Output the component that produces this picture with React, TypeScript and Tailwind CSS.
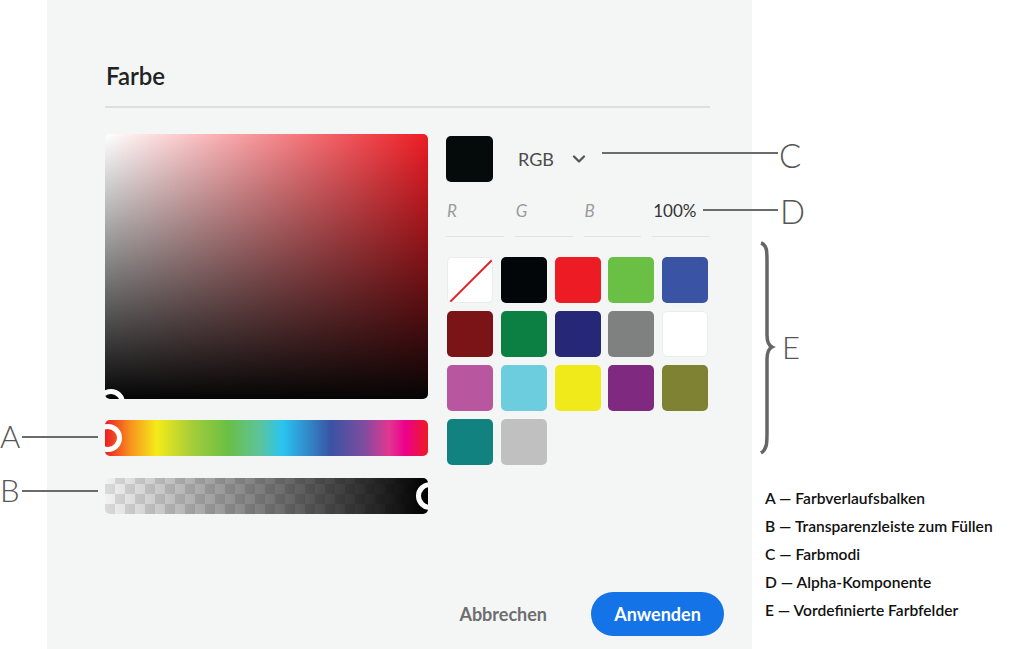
import { ChevronDown } from 'lucide-react'

const swatches = [
  'none', '#030608', '#ed1c24', '#6abf45', '#3a53a4',
  '#7b1416', '#0b8042', '#262877', '#7f8080', '#ffffff',
  '#b8569f', '#6ccddf', '#f1ea1a', '#7f2a80', '#7f8233',
  '#11827f', '#c0c0c0',
]

const legend = [
  'A — Farbverlaufsbalken',
  'B — Transparenzleiste zum Füllen',
  'C — Farbmodi',
  'D — Alpha-Komponente',
  'E — Vordefinierte Farbfelder',
]

function Ring({ className }: { className: string }) {
  return <div className={`absolute w-[28px] h-[28px] rounded-full border-[5px] border-white ${className}`} />
}

export default function App() {
  return (
    <div className="relative w-[1009px] h-[649px] bg-white flex font-['Lato',sans-serif] overflow-hidden">
      <div className="w-[47px] shrink-0" />

      {/* dialog */}
      <div className="w-[705px] h-full shrink-0 bg-[#f4f6f6] pl-[58px] pr-[28px] pt-[62px] flex flex-col">
        <h2 className="text-[24px] leading-[28px] font-semibold text-[#222] pl-[1px]">Farbe</h2>
        <div className="mt-[16px] w-[605px] h-[2px] bg-[#dcdfdf]" />

        <div className="mt-[26px] flex gap-[18px]">
          {/* pickers */}
          <div className="w-[323px] flex flex-col">
            <div className="relative h-[265px] rounded-[5px] overflow-hidden bg-[linear-gradient(to_top,#050505,transparent),linear-gradient(to_right,#ffffff,#ed1c24)]">
              <Ring className="left-[-8px] bottom-[-18px]" />
            </div>
            <div className="relative mt-[21px] h-[36px] rounded-[5px] overflow-hidden bg-[linear-gradient(to_right,#ed1c24_0%,#f7941d_8%,#f4eb1a_16%,#a4cd39_27%,#6abf45_38%,#5cc49c_48%,#29c4f0_55%,#3a53a4_70%,#7d4d9f_80%,#e3368f_88%,#ec008c_93%,#ed1c24_100%)]">
              <Ring className="left-[-11px] top-[4px]" />
            </div>
            <div className="relative mt-[22px] h-[36px] rounded-[5px] overflow-hidden bg-[repeating-conic-gradient(#dadada_0%_25%,#f2f2f2_0%_50%)] bg-[length:20px_20px] bg-[position:0_-4px]">
              <div className="absolute inset-0 bg-[linear-gradient(to_right,rgba(0,0,0,0),#000)]" />
              <Ring className="right-[-16px] top-[4px]" />
            </div>
          </div>

          {/* values */}
          <div className="w-[264px] flex flex-col">
            <div className="mt-[2px] flex items-center h-[46px]">
              <div className="w-[47px] h-[46px] rounded-[5px] bg-[#050a0b]" />
              <span className="ml-[25px] text-[18px] text-[#4b4b4b]">RGB</span>
              <ChevronDown className="ml-[15px] text-[#555]" size={20} strokeWidth={2.75} />
            </div>
            <div className="mt-[13px] grid grid-cols-4 gap-[11px]">
              {['R', 'G', 'B'].map((c) => (
                <div key={c} className="h-[42px] border-b border-[#e2e4e4] pt-[4px] pl-[1px]">
                  <span className="text-[17px] leading-[24px] italic text-[#9b9b9b]">{c}</span>
                </div>
              ))}
              <div className="h-[42px] border-b border-[#e2e4e4] pt-[4px] pl-[1px]">
                <span className="text-[17px] leading-[24px] text-[#333]">100%</span>
              </div>
            </div>
            <div className="mt-[20px] grid grid-cols-5 gap-[8px] w-[262px] pl-[1px]">
              {swatches.map((s, i) =>
                s === 'none' ? (
                  <div key={i} className="relative w-[46px] h-[46px] rounded-[5px] bg-white border border-[#ececec] overflow-hidden">
                    <svg className="absolute inset-0" width="46" height="46" viewBox="0 0 46 46">
                      <line x1="2" y1="44" x2="44" y2="2" stroke="#e0262c" strokeWidth="2" />
                    </svg>
                  </div>
                ) : (
                  <div
                    key={i}
                    className={`w-[46px] h-[46px] rounded-[5px] ${s === '#ffffff' ? 'border border-[#ececec]' : ''}`}
                    style={{ backgroundColor: s }}
                  />
                )
              )}
            </div>
          </div>
        </div>

        <div className="mt-[78px] flex items-center justify-end gap-[44px]">
          <span className="text-[18px] font-bold text-[#6e6e6e]">Abbrechen</span>
          <button className="w-[133px] h-[44px] rounded-full bg-[#1473e6] text-white text-[18px] font-bold">
            Anwenden
          </button>
        </div>
      </div>

      {/* legend */}
      <div className="flex-1 pl-[13px] pt-[484px] flex flex-col">
        {legend.map((l) => (
          <div key={l} className="text-[15.6px] leading-[28px] font-semibold text-[#111] whitespace-nowrap">
            {l}
          </div>
        ))}
      </div>

      {/* callouts */}
      <div className="absolute left-0 top-[418px] text-[31px] leading-[36px] font-light text-[#555]">A</div>
      <div className="absolute left-[22px] top-[436px] w-[76px] h-[2px] bg-[#6b6b6b]" />
      <div className="absolute left-0 top-[472px] text-[31px] leading-[36px] font-light text-[#555]">B</div>
      <div className="absolute left-[22px] top-[490px] w-[76px] h-[2px] bg-[#6b6b6b]" />

      <div className="absolute left-[602px] top-[152px] w-[176px] h-[2px] bg-[#6b6b6b]" />
      <div className="absolute left-[779px] top-[137px] text-[33px] leading-[36px] font-light text-[#555]">C</div>
      <div className="absolute left-[703px] top-[209px] w-[75px] h-[2px] bg-[#6b6b6b]" />
      <div className="absolute left-[780px] top-[193px] text-[33px] leading-[36px] font-light text-[#555]">D</div>

      <svg className="absolute left-[756px] top-[241px]" width="22" height="214" viewBox="0 0 22 214">
        <path
          d="M5 2 C11 4 11 10 11 20 L11 94 C11 100 12 104 16 106 C12 108 11 112 11 118 L11 192 C11 202 11 208 5 212"
          fill="none"
          stroke="#666"
          strokeWidth="3.5"
        />
      </svg>
      <div className="absolute left-[782px] top-[329px] text-[31px] leading-[36px] font-light text-[#555]">E</div>
    </div>
  )
}
